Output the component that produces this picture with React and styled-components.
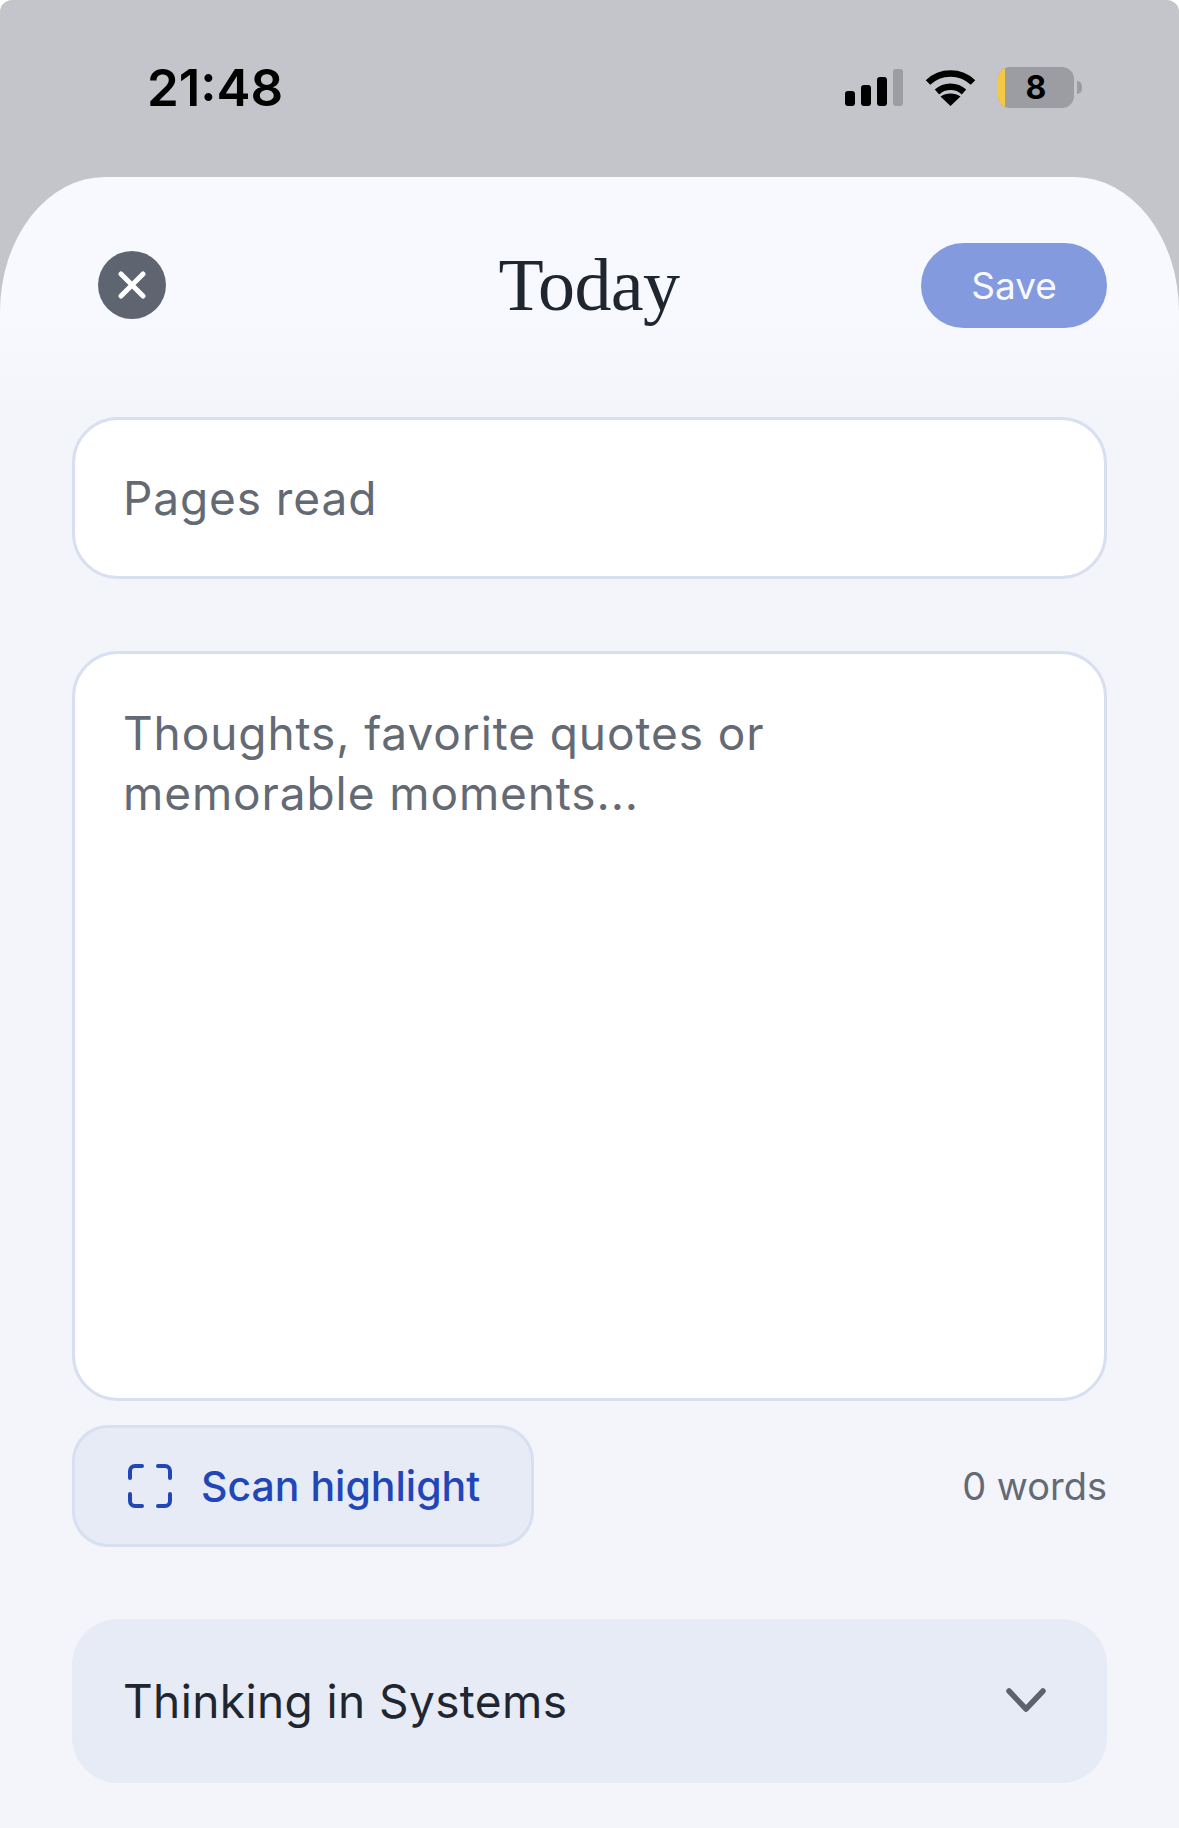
import styled, { createGlobalStyle } from 'styled-components'

const GlobalStyle = createGlobalStyle`
    * {
        box-sizing: border-box;
    }

    body {
        margin: 0;
        background: #fff;
        font-family: "Inter", "Noto Sans", sans-serif;
    }
`

function SignalIcon() {
    return (
        <svg width="58" height="37" viewBox="0 0 58 37">
            <rect x="0" y="22" width="10" height="15" rx="3" fill="#000" />
            <rect x="16" y="16" width="10" height="21" rx="3" fill="#000" />
            <rect x="32" y="8" width="10" height="29" rx="3" fill="#000" />
            <rect x="48" y="0" width="10" height="37" rx="3" fill="#9c9da2" />
        </svg>
    )
}

function WifiIcon() {
    return (
        <svg width="51" height="37" viewBox="0 0 51 37" fill="none">
            <path d="M3 13.5C15.5 1.5 35.5 1.5 48 13.5" stroke="#000" strokeWidth="6.5" />
            <path d="M12 23C19.5 16 31.5 16 39 23" stroke="#000" strokeWidth="6.5" />
            <path d="M25.5 37L15.5 27.5C21 23.5 30 23.5 35.5 27.5Z" fill="#000" />
        </svg>
    )
}

function ScanIcon() {
    return (
        <svg width="44" height="44" viewBox="0 0 44 44" fill="none" stroke="#2146b8" strokeWidth="4" strokeLinecap="round" strokeLinejoin="round">
            <path d="M2 14V7a5 5 0 0 1 5-5h7" />
            <path d="M30 2h7a5 5 0 0 1 5 5v7" />
            <path d="M2 30v7a5 5 0 0 0 5 5h7" />
            <path d="M42 30v7a5 5 0 0 1-5 5h-7" />
        </svg>
    )
}

function App() {
    return (
        <Screen>
            <GlobalStyle />
            <StatusBar>
                <Time>21:48</Time>
                <StatusIcons>
                    <SignalIcon />
                    <WifiIcon />
                    <Battery>
                        <BatteryBody>
                            <BatteryLevel />
                            <BatteryText>8</BatteryText>
                        </BatteryBody>
                        <BatteryNub />
                    </Battery>
                </StatusIcons>
            </StatusBar>

            <Sheet>
                <Header>
                    <CloseButton aria-label="Close">
                        <svg width="28" height="28" viewBox="0 0 28 28" fill="none" stroke="#fff" strokeWidth="5" strokeLinecap="round">
                            <path d="M3 3L25 25M25 3L3 25" />
                        </svg>
                    </CloseButton>
                    <Title>Today</Title>
                    <SaveButton>Save</SaveButton>
                </Header>

                <PagesField>Pages read</PagesField>
                <NotesField>
                    Thoughts, favorite quotes or
                    <br />
                    memorable moments...
                </NotesField>

                <ActionRow>
                    <ScanButton>
                        <ScanIcon />
                        Scan highlight
                    </ScanButton>
                    <WordCount>0 words</WordCount>
                </ActionRow>

                <BookSelect>
                    Thinking in Systems
                    <svg width="44" height="28" viewBox="0 0 44 28" fill="none" stroke="#5d636e" strokeWidth="5.5" strokeLinecap="round" strokeLinejoin="round">
                        <path d="M5 4L22 22L39 4" />
                    </svg>
                </BookSelect>
            </Sheet>
        </Screen>
    )
}

const Screen = styled.div`
    display: flex;
    flex-direction: column;
    width: 1179px;
    height: 1828px;
    overflow: hidden;
    border-radius: 12px 12px 0 0;
    background-color: #c4c5ca;
`

const StatusBar = styled.div`
    display: flex;
    align-items: center;
    justify-content: space-between;
    flex: none;
    height: 177px;
    padding: 0 97px 2px 147px;
`

const Time = styled.div`
    font-size: 51px;
    font-weight: 600;
    color: #000;
`

const StatusIcons = styled.div`
    display: flex;
    align-items: center;
    gap: 22px;
`

const Battery = styled.div`
    display: flex;
    align-items: center;
    gap: 3px;
`

const BatteryBody = styled.div`
    position: relative;
    display: flex;
    align-items: center;
    justify-content: center;
    width: 76px;
    height: 41px;
    overflow: hidden;
    border-radius: 12px;
    background-color: #9c9da2;
`

const BatteryLevel = styled.div`
    position: absolute;
    left: 0;
    top: 0;
    bottom: 0;
    width: 7px;
    background-color: #f6c945;
`

const BatteryText = styled.span`
    font-size: 32px;
    font-weight: 700;
    color: #000;
`

const BatteryNub = styled.div`
    width: 5px;
    height: 13px;
    border-radius: 0 7px 7px 0;
    background-color: #9c9da2;
`

const Sheet = styled.div`
    display: flex;
    flex-direction: column;
    flex: 1;
    padding: 66px 72px 0;
    border-radius: 105px 105px 0 0 / 135px 135px 0 0;
    background: linear-gradient(#f8f9fe 0, #f8f9fe 130px, #f3f5fb 240px);
`

const Header = styled.div`
    display: grid;
    grid-template-columns: 1fr auto 1fr;
    align-items: center;
    height: 85px;
    padding-left: 26px;
`

const CloseButton = styled.button`
    display: flex;
    align-items: center;
    justify-content: center;
    width: 68px;
    height: 68px;
    margin-bottom: 2px;
    padding: 0;
    border: none;
    border-radius: 50%;
    background-color: #5f6570;
`

const Title = styled.h1`
    margin: 0 0 0 -27px;
    font-family: "Liberation Serif", serif;
    font-size: 74px;
    font-weight: 400;
    letter-spacing: -0.6px;
    color: #1f2630;
`

const SaveButton = styled.button`
    justify-self: end;
    width: 186px;
    height: 85px;
    padding: 0;
    border: none;
    border-radius: 43px;
    background-color: #849ade;
    font-family: inherit;
    font-size: 37px;
    color: #f8f9fe;
`

const Field = styled.div`
    border: 3px solid #d7dff1;
    background-color: #fff;
    font-size: 46px;
    letter-spacing: 0.9px;
    line-height: 60px;
    color: #646a74;
`

const PagesField = styled(Field)`
    display: flex;
    align-items: center;
    height: 162px;
    margin-top: 89px;
    padding: 0 48px;
    border-radius: 46px;
`

const NotesField = styled(Field)`
    height: 750px;
    margin-top: 72px;
    padding: 49px 48px;
    border-radius: 46px;
`

const ActionRow = styled.div`
    display: flex;
    align-items: center;
    justify-content: space-between;
    margin-top: 24px;
`

const ScanButton = styled.button`
    display: flex;
    align-items: center;
    gap: 29px;
    width: 462px;
    height: 122px;
    padding: 0 0 0 53px;
    border: 3px solid #d7dff1;
    border-radius: 36px;
    background-color: #e7ebf6;
    font-family: inherit;
    font-size: 41px;
    font-weight: 500;
    color: #2146b8;
`

const WordCount = styled.div`
    font-size: 38px;
    color: #646a74;
`

const BookSelect = styled.div`
    display: flex;
    align-items: center;
    justify-content: space-between;
    height: 164px;
    margin-top: 72px;
    padding: 0 59px 0 51px;
    border-radius: 46px;
    background-color: #e7ebf6;
    font-size: 46px;
    letter-spacing: 0.4px;
    color: #20262f;
`

export default App
